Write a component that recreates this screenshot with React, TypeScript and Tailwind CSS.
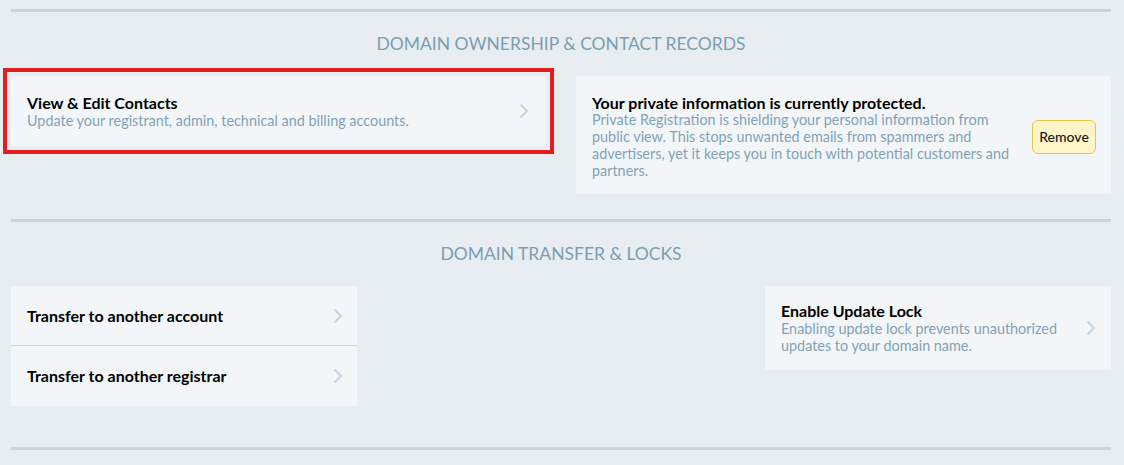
import React from 'react';

const Chevron: React.FC = () => (
  <svg width="10" height="16" viewBox="0 0 10 16" fill="none" className="shrink-0">
    <path d="M1.5 1.5L8 8l-6.5 6.5" stroke="#c6d4de" strokeWidth="2" />
  </svg>
);

const Divider: React.FC = () => <div className="h-[3px] bg-[#c9d5dc]" />;

const Heading: React.FC<{ children: React.ReactNode }> = ({ children }) => (
  <h2 className="my-5 text-center text-[17.5px] leading-6 uppercase text-[#7b9eb2]">{children}</h2>
);

const App: React.FC = () => {
  return (
    <div className="min-h-screen bg-[#e8edf1] pl-[11px] pr-[13px] pt-[9px] font-['Lato','Liberation_Sans',sans-serif] text-black">
      <Divider />
      <Heading>Domain Ownership &amp; Contact Records</Heading>

      <div className="grid grid-cols-2 gap-[30px] items-start">
        <div className="flex items-center justify-between bg-[#f2f6f9] h-[70px] pl-4 pr-[17px] outline-4 outline-[#e41b1f] outline-offset-4">
          <div>
            <div className="text-[16px] leading-[18px] font-bold">View &amp; Edit Contacts</div>
            <div className="text-[14.4px] leading-[17px] text-[#83a2b6]">
              Update your registrant, admin, technical and billing accounts.
            </div>
          </div>
          <Chevron />
        </div>

        <div className="flex items-center gap-5 bg-[#f2f6f9] pl-4 pr-[15px] pt-[18px] pb-[15px]">
          <div className="flex-1">
            <div className="text-[16px] leading-[17px] font-bold">Your private information is currently protected.</div>
            <div className="text-[14.4px] leading-[17px] text-[#83a2b6]">
              Private Registration is shielding your personal information from public view. This stops unwanted emails
              from spammers and advertisers, yet it keeps you in touch with potential customers and partners.
            </div>
          </div>
          <button className="h-[34px] w-16 rounded-md border border-[#e6c545] bg-[#fff5c9] text-[14px] font-medium text-[#1a1a1a]">
            Remove
          </button>
        </div>
      </div>

      <div className="mt-[25px]">
        <Divider />
      </div>
      <Heading>Domain Transfer &amp; Locks</Heading>

      <div className="grid grid-cols-3 gap-[31px] items-start">
        <div className="bg-[#f2f6f9]">
          <div className="flex items-center justify-between h-[60px] pl-4 pr-[14px] border-b border-[#c9d7e1]">
            <span className="text-[16px] font-bold">Transfer to another account</span>
            <Chevron />
          </div>
          <div className="flex items-center justify-between h-[60px] pl-4 pr-[14px]">
            <span className="text-[16px] font-bold">Transfer to another registrar</span>
            <Chevron />
          </div>
        </div>
        <div />
        <div className="flex items-center justify-between gap-4 bg-[#f2f6f9] h-[84px] pl-4 pr-[15px]">
          <div>
            <div className="text-[16px] leading-[18px] font-bold">Enable Update Lock</div>
            <div className="text-[14.4px] leading-[17px] text-[#83a2b6]">
              Enabling update lock prevents unauthorized updates to your domain name.
            </div>
          </div>
          <Chevron />
        </div>
      </div>

      <div className="mt-[41px]">
        <Divider />
      </div>
    </div>
  );
};

export default App;
